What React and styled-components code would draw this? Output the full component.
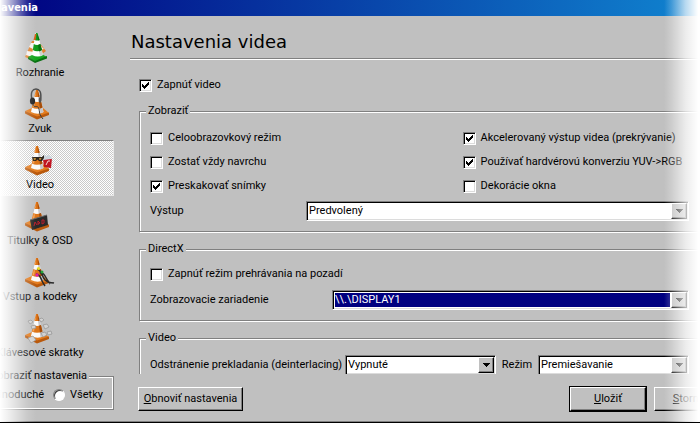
import React from "react";
import styled, { createGlobalStyle, css } from "styled-components";

const face = "#c0c0c0";
const shade = "#808080";
const uiFont = 'Roboto, "DejaVu Sans Condensed", sans-serif';

const GlobalStyle = createGlobalStyle`
  * { box-sizing: border-box; }
  body {
    margin: 0;
    background: ${face};
    color: #000;
    font: 11px/14px ${uiFont};
  }
  button, select, input { font: inherit; color: inherit; }
`;

const Window = styled.div`
  position: relative;
  display: flex;
  flex-direction: column;
  height: 100vh;
  overflow: hidden;
  background: ${face};
  border-bottom: 1px solid #000;
  box-shadow: inset 0 -1px 0 ${shade};
  white-space: nowrap;

  &::before,
  &::after {
    content: "";
    position: absolute;
    z-index: 1;
    top: 0;
    bottom: -1px;
    width: 36px;
    pointer-events: none;
  }
  &::before {
    left: 0;
    background: linear-gradient(to right, #fff, rgba(255, 255, 255, 0.62) 35%, rgba(255, 255, 255, 0.16) 75%, transparent);
  }
  &::after {
    right: 0;
    background: linear-gradient(to left, #fff 5%, rgba(255, 255, 255, 0.7) 40%, rgba(255, 255, 255, 0.2) 80%, transparent);
  }
`;

const TitleBar = styled.header`
  flex: none;
  height: 16px;
  padding-left: 1px;
  background: linear-gradient(to right, #000080, #0a4fb0 60%, #1084d0);
  color: #fff;
  font-family: "DejaVu Sans Condensed", sans-serif;
  font-weight: bold;
  line-height: 16px;
`;

const Body = styled.div`
  flex: 1;
  display: grid;
  grid-template-columns: 114px minmax(0, 1fr);
  gap: 16px;
  min-height: 0;
`;

const Sidebar = styled.aside`
  display: flex;
  flex-direction: column;
  justify-content: space-between;
  align-items: flex-end;
  padding: 12px 0 12px;
  overflow: hidden;
`;

const CategoryList = styled.nav`
  display: flex;
  flex-direction: column;
  width: 148px;
`;

const CategoryButton = styled.button`
  display: flex;
  flex-direction: column;
  align-items: center;
  gap: 2px;
  height: 56px;
  padding: 3px 0 0;
  border: 1px solid transparent;
  background: none;
  ${(p) =>
    p.$selected &&
    css`
      border-color: ${shade} #e8e8e8 #e8e8e8 ${shade};
      background: repeating-conic-gradient(#fff 0 25%, #cacaca 0 50%) 0 0 / 2px 2px;
    `}
`;

const ViewGroup = styled.fieldset`
  display: flex;
  justify-content: flex-end;
  gap: 9px;
  width: 148px;
  margin: 0;
  padding: 5px 10px 7px;
  border: 1px solid ${shade};
  box-shadow: inset 1px 1px 0 #fff, inset -1px -1px 0 #fff;
`;

const Legend = styled.legend`
  padding: 0 2px;
  background: ${face};
`;

const ViewLegend = styled(Legend)`
  margin-left: auto;
  margin-right: 14px;
`;

const RadioLabel = styled.label`
  display: flex;
  align-items: center;
  gap: 5px;
`;

const Radio = styled.input`
  appearance: none;
  width: 12px;
  height: 12px;
  margin: 0;
  border: 1px solid;
  border-color: ${shade} #fff #fff ${shade};
  border-radius: 50%;
  background: #fff;
  box-shadow: inset 1px 1px 0 #404040;
  &:checked {
    background: radial-gradient(#000 2px, #fff 3px);
  }
`;

const Main = styled.main`
  display: flex;
  flex-direction: column;
  min-width: 0;
  min-height: 0;
`;

const Page = styled.div`
  flex: 1;
  min-height: 0;
  overflow: hidden;
`;

const Heading = styled.h1`
  margin: 0;
  padding: 14px 0 5px 1px;
  border-bottom: 1px solid ${shade};
  box-shadow: 0 1px 0 #fff;
  font: 18px/23px "DejaVu Sans", sans-serif;
`;

const Settings = styled.div`
  display: flex;
  flex-direction: column;
  padding: 19px 1px 0 9px;
`;

const Groups = styled.div`
  display: flex;
  flex-direction: column;
  gap: 10px;
  margin-top: 12px;
`;

const Group = styled.fieldset`
  min-width: 0;
  margin: 0;
  padding: ${(p) => p.$padTop}px 9px 10px 10px;
  border: 1px solid ${shade};
  box-shadow: inset 1px 1px 0 #fff, 1px 1px 0 #fff;

  ${Legend} {
    margin-left: -4px;
  }
`;

const OptionGrid = styled.div`
  display: grid;
  grid-template-columns: 29fr 21fr;
  grid-template-rows: repeat(3, auto);
  grid-auto-flow: column;
  row-gap: 10px;
`;

const CheckLabel = styled.label`
  display: flex;
  align-items: center;
  gap: 5px;
  height: 14px;
`;

const CheckCell = styled.span`
  display: grid;
  width: 13px;
  height: 13px;
  > * {
    grid-area: 1 / 1;
  }
  svg {
    pointer-events: none;
    visibility: hidden;
  }
  input:checked + svg {
    visibility: visible;
  }
`;

const CheckInput = styled.input`
  appearance: none;
  width: 13px;
  height: 13px;
  margin: 0;
  border: 1px solid;
  border-color: ${shade} #fff #fff ${shade};
  background: #fff;
  box-shadow: inset 1px 1px 0 #000, inset -1px -1px 0 #dcdcdc;
`;

const FieldRow = styled.div`
  display: grid;
  grid-template-columns: ${(p) => p.$columns};
  align-items: center;
  margin-top: ${(p) => p.$top || 0}px;
`;

const ModeLabel = styled.label`
  text-align: center;
`;

const SelectBox = styled.span`
  display: flex;
  min-width: 0;
  height: 20px;
  padding: 1px;
  border: 1px solid;
  border-color: ${shade} #fff #fff ${shade};
  background: #fff;
  box-shadow: inset 1px 1px 0 #000, inset -1px -1px 0 #dcdcdc;
`;

const Select = styled.select`
  appearance: none;
  flex: 1;
  min-width: 0;
  margin: 1px;
  padding: 0;
  border: 0;
  outline: 0;
  border-radius: 0;
  line-height: 14px;
  background: ${(p) => (p.$highlight ? "#000080" : "#fff")};
  color: ${(p) => (p.$highlight ? "#fff" : "#000")};
`;

const SelectArrow = styled.span`
  display: grid;
  place-items: center;
  width: 16px;
  border: 1px solid;
  border-color: #fff #000 #000 #fff;
  background: ${face};
  box-shadow: inset -1px -1px 0 ${shade};
  pointer-events: none;
`;

const Footer = styled.footer`
  flex: none;
  display: flex;
  padding: 13px 0 11px 8px;
`;

const Button = styled.button`
  width: ${(p) => p.$width}px;
  flex: none;
  height: 24px;
  padding: 0;
  border: 1px solid;
  border-color: #fff #000 #000 #fff;
  background: ${face};
  box-shadow: inset -1px -1px 0 ${shade}${(p) => (p.$primary ? ", 0 0 0 1px #000" : "")};
`;

const FooterActions = styled.div`
  display: flex;
  gap: 8px;
  margin-left: auto;
  margin-right: -24px;
`;

function Cone() {
  return (
    <g>
      <path d="M1 23 L8 20 L19 20 L25 25 L13 30 Z" fill="#e37c1e" />
      <path d="M1 23 L13 28.500 L25 24.500 V27 L13 31.500 L1 25.500 Z" fill="#b9590c" />
      <path d="M12 2 H14 L19.500 24 Q14 27.500 7 24 Z" fill="#fafafa" />
      <path d="M14 9 L16.500 25.500 L19.500 24 L15.600 8 Z" fill="#c6c6ca" />
      <path d="M12 2 H14 L15.700 8.500 Q13 9.500 10.300 8.500 Z M9.300 13 Q13 15 16.900 13 L18.500 19.500 Q13 22 7.700 19.500 Z" fill="#dd7519" />
      <path d="M13.500 2 L15.700 8.500 L14 9 Z M15 14 L16.900 13 L18.500 19.500 L16 20.600 Z" fill="#a54d0b" />
      <path d="M11.600 4 L10.700 8 L11.800 8 Z M9.800 14 L8.500 19 L10 19.600 L11 14.500 Z" fill="#f3a051" />
    </g>
  );
}

const drawings = {
  interface: (
    <g>
      <path d="M8 9 L1 25 L8 28 L18 22 L22 19 L14 9 Z" fill="#e0802c" />
      <path d="M7 11 L5 15 L11 18 L12 11 Z M3 19 L2 23 L8 25 L11 20 Z M15 12 L20 17 L16 18 Z" fill="#f6f2ee" />
      <path d="M4 25 L14 20 L23 25 L11 30 Z" fill="#14a51c" />
      <path d="M4 25 L11 29 L23 24 V26.500 L11 31 L4 27 Z" fill="#087010" />
      <path d="M11.500 1 H13.500 L19 23 Q14 26 8 23 Z" fill="#fff" />
      <path d="M14 14 L16 24 L19 23 L16 12 Z" fill="#ccd4cc" />
      <path d="M12 1 H13.500 L15.600 8 Q13 9 10.800 8 Z M9.800 12 Q13 14 16.300 12 L18 18 Q13 20.500 8.800 18 Z" fill="#0f9a1b" />
      <path d="M13 1 L15.600 8 L14 8.500 Z M14 13 L16.300 12 L18 18 L15 19.500 Z" fill="#06710f" />
      <path d="M11 2 L9.500 8 L11.500 8 L12.500 2 Z" fill="#d95f17" />
    </g>
  ),
  audio: (
    <g>
      <Cone />
      <path d="M8 13 C6 3 9 1 12 1 S18 3 16.500 13" fill="none" stroke="#4c4c4c" strokeWidth="1.500" />
      <ellipse cx="8.500" cy="13" rx="2.600" ry="3.600" fill="#242424" />
      <ellipse cx="16" cy="12" rx="1.300" ry="3" fill="#555" />
      <path d="M9 16 C9 21 14 16 15 21 S15 26 19 31" fill="none" stroke="#3c3c3c" />
    </g>
  ),
  video: (
    <g>
      <Cone />
      <path d="M19 15 L28 14 L27 24 L20 23 Z" fill="#c01420" />
      <path d="M18 14 L20 11 L23 12 L25 11 L28 13 L28 15 L19 16 Z" fill="#cdd6de" />
      <path d="M22 21 L24 17 L26 17" stroke="#f3dada" fill="none" />
      <path d="M8 13 L18 13 L20 11 L20 14 L18 17 H15 L13.500 15.500 L12 17 H9 Z" fill="#2d251c" />
      <path d="M9.500 14 H12 L11.500 16 H10 Z M15 14 H17.500 L16.500 16 H15.500 Z" fill="#bd8934" />
    </g>
  ),
  subtitles: (
    <g>
      <Cone />
      <path d="M6 20 L23 15 L24 25 L8 30 Z" fill="#292929" />
      <path d="M6 20 L23 15" stroke="#666" />
      <path d="M10 26 L11 22 L13 25 M14 25 V21 L16 23 L14 24 M18 24 V20 H20 V23 Z" fill="none" stroke="#b91f2c" />
    </g>
  ),
  codecs: (
    <g>
      <Cone />
      <path d="M13 13 C19 15 17 20 21 24 S27 26 30 27 M12 18 C18 19 16 24 21 30 M16 17 C21 16 21 22 26 28" fill="none" stroke="#292929" strokeWidth="1.500" />
      <circle cx="14.500" cy="12.500" r="1.600" fill="#e9dc20" />
      <circle cx="13" cy="19" r="1.700" fill="#e120a4" />
      <circle cx="18" cy="16" r="1.500" fill="#26a638" />
    </g>
  ),
  hotkeys: (
    <g>
      <Cone />
      <g fill="#d2d2d2" stroke="#929292" strokeWidth="0.700">
        <path d="M4 9 L7 8 L9 10 L6 12 Z M15 7 L18 6 L20 8 L17 10 Z M7 14 L11 13 L12 16 L8 17 Z M19 13 L23 12 L25 15 L21 17 Z M4 26 L9 24 L12 28 L7 31 Z M17 21 L21 20 L23 23 L19 25 Z M23 20 L27 19 L28 22 L24 23 Z" />
      </g>
    </g>
  ),
};

const categories = [
  ["interface", "Rozhranie"],
  ["audio", "Zvuk"],
  ["video", "Video"],
  ["subtitles", "Titulky & OSD"],
  ["codecs", "Vstup a kodeky"],
  ["hotkeys", "Klávesové skratky"],
];

function Check({ label, checked }) {
  return (
    <CheckLabel>
      <CheckCell>
        <CheckInput type="checkbox" defaultChecked={checked} />
        <svg width="13" height="13" viewBox="0 0 13 13" shapeRendering="crispEdges" aria-hidden="true">
          <path d="M3 5h1v1h1v1h1v-1h1v-1h1v-1h1v-1h1v3h-1v1h-1v1h-1v1h-1v1h-1v-1h-1v-1h-1z" />
        </svg>
      </CheckCell>
      {label}
    </CheckLabel>
  );
}

function Dropdown({ id, value, highlight, muted }) {
  return (
    <SelectBox>
      <Select id={id} $highlight={highlight}>
        <option>{value}</option>
      </Select>
      <SelectArrow>
        <svg width="7" height="4" viewBox="0 0 7 4" shapeRendering="crispEdges" aria-hidden="true">
          <path d="M0 0h7v1h-1v1h-1v1h-1v1h-1v-1h-1v-1h-1v-1h-1z" fill={muted ? "#202020" : "#000"} />
        </svg>
      </SelectArrow>
    </SelectBox>
  );
}

export default function App() {
  return (
    <Window>
      <GlobalStyle />
      <TitleBar>avenia</TitleBar>
      <Body>
        <Sidebar>
          <CategoryList>
            {categories.map(([id, label]) => (
              <CategoryButton key={id} type="button" $selected={id === "video"}>
                <svg width="32" height="32" viewBox="0 0 32 32" aria-hidden="true">
                  {drawings[id]}
                </svg>
                {label}
              </CategoryButton>
            ))}
          </CategoryList>
          <ViewGroup>
            <ViewLegend>Zobraziť nastavenia</ViewLegend>
            <RadioLabel>
              <Radio type="radio" name="view" defaultChecked />
              Jednoduché
            </RadioLabel>
            <RadioLabel>
              <Radio type="radio" name="view" />
              Všetky
            </RadioLabel>
          </ViewGroup>
        </Sidebar>
        <Main>
          <Page>
            <Heading>Nastavenia videa</Heading>
            <Settings>
              <Check label="Zapnúť video" checked />
              <Groups>
                <Group $padTop={13}>
                  <Legend>Zobraziť</Legend>
                  <OptionGrid>
                    <Check label="Celoobrazovkový režim" />
                    <Check label="Zostať vždy navrchu" />
                    <Check label="Preskakovať snímky" checked />
                    <Check label="Akcelerovaný výstup videa (prekrývanie)" checked />
                    <Check label="Používať hardvérovú konverziu YUV->RGB" checked />
                    <Check label="Dekorácie okna" />
                  </OptionGrid>
                  <FieldRow $columns="156px minmax(0, 1fr)" $top={8}>
                    <label htmlFor="output">Výstup</label>
                    <Dropdown id="output" value="Predvolený" muted />
                  </FieldRow>
                </Group>
                <Group $padTop={11}>
                  <Legend>DirectX</Legend>
                  <Check label="Zapnúť režim prehrávania na pozadí" />
                  <FieldRow $columns="182px minmax(0, 1fr)" $top={9}>
                    <label htmlFor="device">Zobrazovacie zariadenie</label>
                    <Dropdown id="device" value="\\.\DISPLAY1" highlight muted />
                  </FieldRow>
                </Group>
                <Group $padTop={10}>
                  <Legend>Video</Legend>
                  <FieldRow $columns="195px minmax(0, 1fr) 42px minmax(0, 1fr)">
                    <label htmlFor="deinterlace">Odstránenie prekladania (deinterlacing)</label>
                    <Dropdown id="deinterlace" value="Vypnuté" />
                    <ModeLabel htmlFor="mode">Režim</ModeLabel>
                    <Dropdown id="mode" value="Premiešavanie" muted />
                  </FieldRow>
                </Group>
              </Groups>
            </Settings>
          </Page>
          <Footer>
            <Button type="button" $width={105}>
              <u>O</u>bnoviť nastavenia
            </Button>
            <FooterActions>
              <Button type="button" $width={76} $primary>
                <u>U</u>ložiť
              </Button>
              <Button type="button" $width={70}>
                <u>S</u>torno
              </Button>
            </FooterActions>
          </Footer>
        </Main>
      </Body>
    </Window>
  );
}
